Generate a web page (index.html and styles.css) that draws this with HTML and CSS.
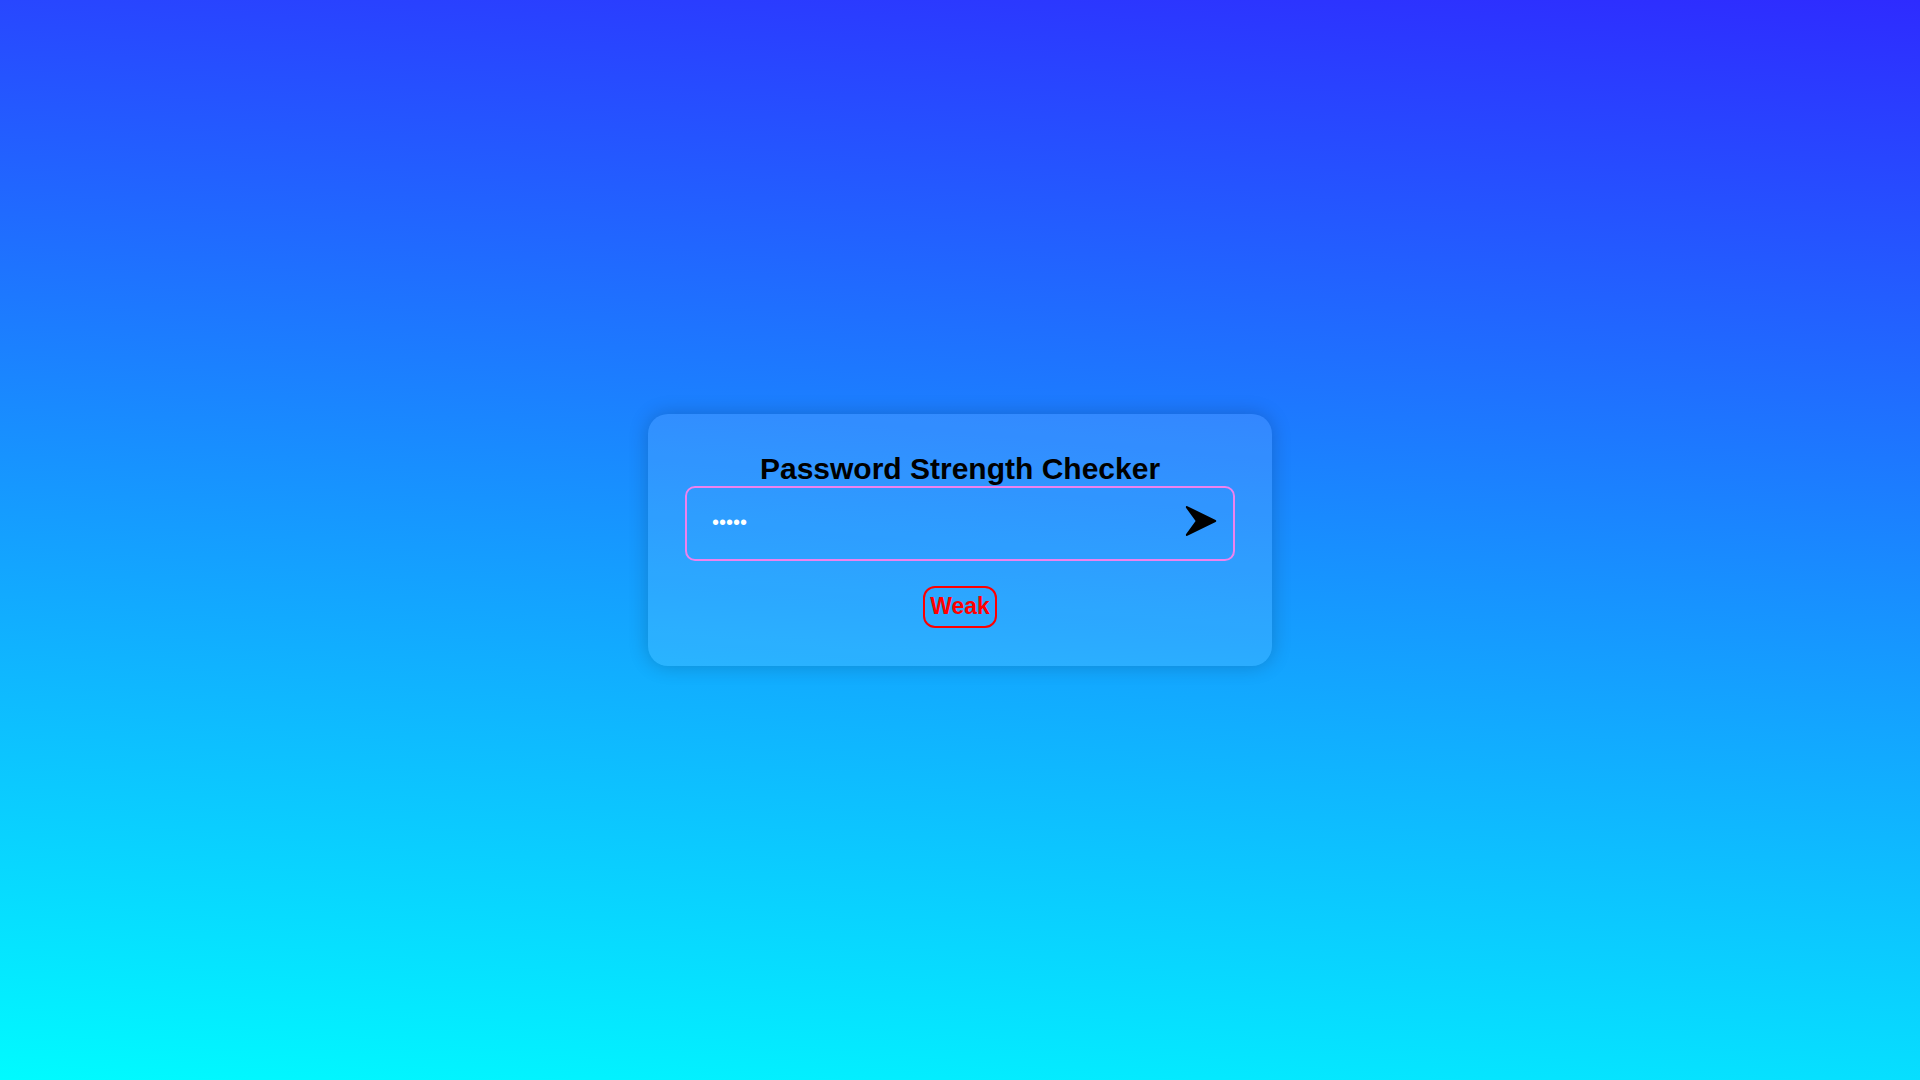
FILE: index.html
```html
<!DOCTYPE html>
<html lang="en">
<head>
<meta charset="utf-8">
<title>Password Strength Checker</title>
<link rel="stylesheet" href="styles.css">
</head>
<body>
<main class="card">
  <h1 class="title"><label for="password">Password Strength Checker</label></h1>
  <form class="field">
    <input class="password" id="password" type="password" value="12345">
    <button class="submit" type="button" aria-label="Check password">
      <svg class="arrow" viewBox="0 0 32 32" aria-hidden="true"><path d="M2.4 1.2 30.6 15 Q32 16 30.6 17 L2.4 30.8 Q.4 31.4 1 29.2 L10.6 16 1 2.8 Q.4.6 2.4 1.2Z"/></svg>
    </button>
  </form>
  <output class="strength" for="password">Weak</output>
</main>
</body>
</html>
```
FILE: styles.css
```css
* {
  box-sizing: border-box;
  margin: 0;
}

body {
  min-height: 100vh;
  padding: 24px;
  display: flex;
  align-items: center;
  justify-content: center;
  background: linear-gradient(5deg, #00fbff, #2e2bff);
  font-family: "Liberation Sans", Arial, sans-serif;
}

.card {
  width: 100%;
  max-width: 624px;
  padding: 38px 37px;
  display: flex;
  flex-direction: column;
  align-items: center;
  border-radius: 20px;
  background: rgba(255, 255, 255, 0.1);
  box-shadow: 0 0 20px rgba(0, 0, 0, 0.2);
}

.title {
  font-size: 30px;
  line-height: 34px;
  text-align: center;
}

.field {
  width: 100%;
  height: 75px;
  display: flex;
  align-items: center;
  border: 2px solid violet;
  border-radius: 10px;
}

.password {
  flex: 1;
  min-width: 0;
  height: 100%;
  padding: 0 25px 2px;
  border: 0;
  outline: 0;
  background: transparent;
  color: white;
  font: 20px "Liberation Sans", Arial, sans-serif;
}

.submit {
  padding: 0 16px 6px 0;
  border: 0;
  background: transparent;
  cursor: pointer;
}

.arrow {
  display: block;
  width: 32px;
  height: 32px;
}

.strength {
  margin-top: 25px;
  padding: 6px 5px 7px;
  border: 2px solid red;
  border-radius: 12px;
  color: red;
  font-size: 23px;
  font-weight: bold;
  line-height: 25px;
}
```
